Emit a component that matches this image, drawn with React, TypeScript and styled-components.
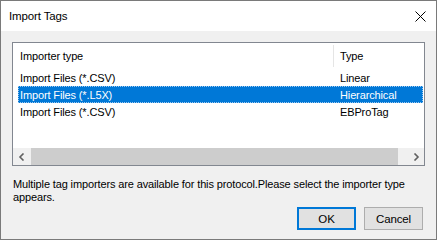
import React from "react";
import styled, { createGlobalStyle } from "styled-components";

const Global = createGlobalStyle`
  html, body { margin: 0; padding: 0; background: #ffffff; }
  body { font-family: "Liberation Sans", Arial, sans-serif; font-size: 11px; letter-spacing: -0.13px; color: #000; }
`;

const Window = styled.div`
  width: 437px;
  height: 240px;
  box-sizing: border-box;
  border: 1px solid #7a7a7a;
  display: flex;
  flex-direction: column;
  background: #f0f0f0;
  overflow: hidden;
`;

const TitleBar = styled.div`
  height: 30px;
  flex-shrink: 0;
  background: #ffffff;
  display: flex;
  align-items: center;
  justify-content: space-between;
  padding: 0 9px 0 8px;
`;

const Title = styled.span`
  font-size: 11.5px;
  line-height: 16px;
`;

const CloseButton = styled.div`
  width: 12px;
  height: 12px;
  display: flex;
  align-items: center;
  justify-content: center;
  margin-right: 1px;
`;

const Body = styled.div`
  flex: 1;
  min-height: 0;
  display: flex;
  flex-direction: column;
  padding: 11px 11px 9px 11px;
`;

const ListBox = styled.div`
  height: 124px;
  flex-shrink: 0;
  box-sizing: border-box;
  border: 1px solid #828790;
  background: #ffffff;
  display: flex;
  flex-direction: column;
`;

const Header = styled.div`
  height: 26px;
  flex-shrink: 0;
  display: flex;
  align-items: stretch;
`;

const HeaderCell = styled.div<{ $w?: number }>`
  ${(p) => (p.$w ? `width: ${p.$w}px;` : "flex: 1;")}
  box-sizing: border-box;
  padding-left: ${(p) => (p.$w ? 7 : 6)}px;
  display: flex;
  align-items: center;
  border-right: ${(p) => (p.$w ? "1px solid #e5e5e5" : "none")};
  margin: 2px 0;
`;

const Rows = styled.div`
  flex: 1;
  display: flex;
  flex-direction: column;
`;

const Row = styled.div<{ $selected?: boolean }>`
  height: 17px;
  flex-shrink: 0;
  display: flex;
  align-items: center;
  margin: 0 1px 0 5px;
  box-sizing: border-box;
  background: ${(p) => (p.$selected ? "#0078d7" : "transparent")};
  color: ${(p) => (p.$selected ? "#ffffff" : "#000000")};
  outline: ${(p) => (p.$selected ? "1px dotted #9cc8f0" : "none")};
  outline-offset: -1px;
`;

const Cell = styled.div<{ $w?: number }>`
  ${(p) => (p.$w ? `width: ${p.$w}px;` : "flex: 1;")}
  box-sizing: border-box;
  padding-left: ${(p) => (p.$w ? 2 : 6)}px;
  white-space: nowrap;
`;

const ScrollBar = styled.div`
  height: 17px;
  flex-shrink: 0;
  display: flex;
  background: #f0f0f0;
`;

const ArrowButton = styled.div`
  width: 17px;
  display: flex;
  align-items: center;
  justify-content: center;
`;

const Track = styled.div`
  flex: 1;
  display: flex;
  padding: 0 9px 0 1px;
`;

const Thumb = styled.div`
  flex: 1;
  background: #cdcdcd;
`;

const Message = styled.div`
  margin-top: 12px;
  line-height: 13px;
  padding-left: 1px;
  white-space: nowrap;
`;

const Buttons = styled.div`
  margin-top: auto;
  display: flex;
  justify-content: flex-end;
  gap: 8px;
  padding-right: 2px;
`;

const Button = styled.div<{ $default?: boolean }>`
  width: 59px;
  height: 23px;
  box-sizing: border-box;
  border: ${(p) => (p.$default ? "2px solid #0078d7" : "1px solid #adadad")};
  background: #e1e1e1;
  display: flex;
  align-items: center;
  justify-content: center;
  font-size: 11.5px;
`;

const rows = [
  { name: "Import Files (*.CSV)", type: "Linear" },
  { name: "Import Files (*.L5X)", type: "Hierarchical", selected: true },
  { name: "Import Files (*.CSV)", type: "EBProTag" },
];

export default function App() {
  return (
    <>
      <Global />
      <Window>
        <TitleBar>
          <Title>Import Tags</Title>
          <CloseButton>
            <svg width="11" height="11" viewBox="0 0 11 11">
              <path d="M0.5 0.5 L10.5 10.5 M10.5 0.5 L0.5 10.5" stroke="#000" strokeWidth="1" />
            </svg>
          </CloseButton>
        </TitleBar>
        <Body>
          <ListBox>
            <Header>
              <HeaderCell $w={321}>Importer type</HeaderCell>
              <HeaderCell>Type</HeaderCell>
            </Header>
            <Rows>
              {rows.map((r, i) => (
                <Row key={i} $selected={r.selected}>
                  <Cell $w={316}>{r.name}</Cell>
                  <Cell>{r.type}</Cell>
                </Row>
              ))}
            </Rows>
            <ScrollBar>
              <ArrowButton>
                <svg width="8" height="8" viewBox="0 0 8 8">
                  <path d="M5.5 0.5 L2 4 L5.5 7.5" stroke="#606060" strokeWidth="1.6" fill="none" />
                </svg>
              </ArrowButton>
              <Track>
                <Thumb />
              </Track>
              <ArrowButton>
                <svg width="8" height="8" viewBox="0 0 8 8">
                  <path d="M2.5 0.5 L6 4 L2.5 7.5" stroke="#606060" strokeWidth="1.6" fill="none" />
                </svg>
              </ArrowButton>
            </ScrollBar>
          </ListBox>
          <Message>
            Multiple tag importers are available for this protocol.Please select the importer type
            <br />
            appears.
          </Message>
          <Buttons>
            <Button $default>OK</Button>
            <Button>Cancel</Button>
          </Buttons>
        </Body>
      </Window>
    </>
  );
}
